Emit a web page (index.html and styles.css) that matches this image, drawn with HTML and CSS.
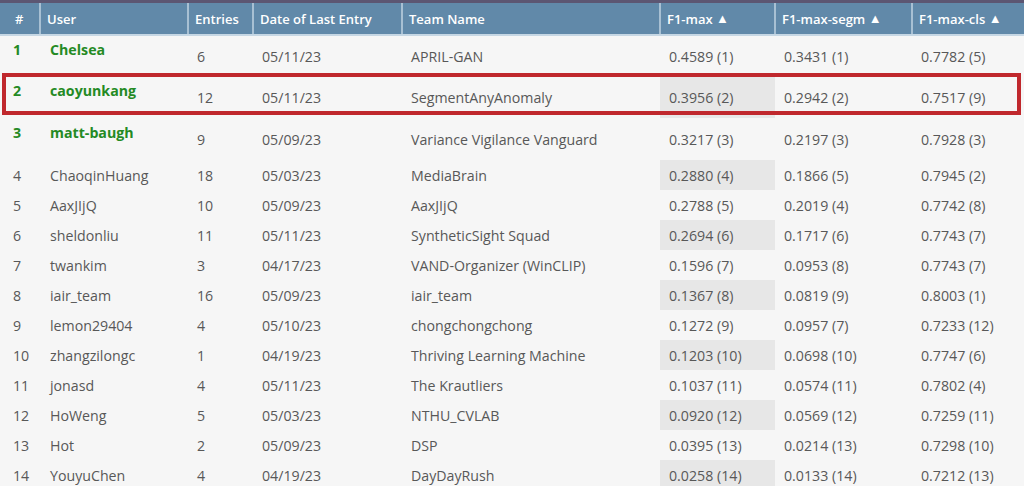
FILE: index.html
```html
<!DOCTYPE html>
<html>
<head>
<meta charset="utf-8">
<link rel="stylesheet" href="styles.css">
</head>
<body>
<div class="page">
  <div class="topbar"></div>
  <div class="board">
    <table class="lb">
      <colgroup>
        <col class="c-rank"><col class="c-user"><col class="c-ent"><col class="c-date">
        <col class="c-team"><col class="c-f1"><col class="c-segm"><col class="c-cls">
      </colgroup>
      <thead>
        <tr>
          <th class="h-rank">#</th>
          <th>User</th>
          <th>Entries</th>
          <th>Date of Last Entry</th>
          <th>Team Name</th>
          <th>F1-max <span class="tri">▲</span></th>
          <th>F1-max-segm <span class="tri">▲</span></th>
          <th>F1-max-cls <span class="tri">▲</span></th>
        </tr>
      </thead>
      <tbody>
        <tr class="top"><td class="rank">1</td><td class="user">Chelsea</td><td>6</td><td>05/11/23</td><td>APRIL-GAN</td><td class="f1">0.4589 (1)</td><td>0.3431 (1)</td><td>0.7782 (5)</td></tr>
        <tr class="top second alt"><td class="rank">2</td><td class="user">caoyunkang</td><td>12</td><td>05/11/23</td><td>SegmentAnyAnomaly</td><td class="f1">0.3956 (2)</td><td>0.2942 (2)</td><td>0.7517 (9)</td></tr>
        <tr class="top third"><td class="rank">3</td><td class="user">matt-baugh</td><td>9</td><td>05/09/23</td><td>Variance Vigilance Vanguard</td><td class="f1">0.3217 (3)</td><td>0.2197 (3)</td><td>0.7928 (3)</td></tr>
        <tr class="alt"><td class="rank">4</td><td class="user">ChaoqinHuang</td><td>18</td><td>05/03/23</td><td>MediaBrain</td><td class="f1">0.2880 (4)</td><td>0.1866 (5)</td><td>0.7945 (2)</td></tr>
        <tr><td class="rank">5</td><td class="user">AaxJIjQ</td><td>10</td><td>05/09/23</td><td>AaxJIjQ</td><td class="f1">0.2788 (5)</td><td>0.2019 (4)</td><td>0.7742 (8)</td></tr>
        <tr class="alt"><td class="rank">6</td><td class="user">sheldonliu</td><td>11</td><td>05/11/23</td><td>SyntheticSight Squad</td><td class="f1">0.2694 (6)</td><td>0.1717 (6)</td><td>0.7743 (7)</td></tr>
        <tr><td class="rank">7</td><td class="user">twankim</td><td>3</td><td>04/17/23</td><td>VAND-Organizer (WinCLIP)</td><td class="f1">0.1596 (7)</td><td>0.0953 (8)</td><td>0.7743 (7)</td></tr>
        <tr class="alt"><td class="rank">8</td><td class="user">iair_team</td><td>16</td><td>05/09/23</td><td>iair_team</td><td class="f1">0.1367 (8)</td><td>0.0819 (9)</td><td>0.8003 (1)</td></tr>
        <tr><td class="rank">9</td><td class="user">lemon29404</td><td>4</td><td>05/10/23</td><td>chongchongchong</td><td class="f1">0.1272 (9)</td><td>0.0957 (7)</td><td>0.7233 (12)</td></tr>
        <tr class="alt"><td class="rank">10</td><td class="user">zhangzilongc</td><td>1</td><td>04/19/23</td><td>Thriving Learning Machine</td><td class="f1">0.1203 (10)</td><td>0.0698 (10)</td><td>0.7747 (6)</td></tr>
        <tr><td class="rank">11</td><td class="user">jonasd</td><td>4</td><td>05/11/23</td><td>The Krautliers</td><td class="f1">0.1037 (11)</td><td>0.0574 (11)</td><td>0.7802 (4)</td></tr>
        <tr class="alt"><td class="rank">12</td><td class="user">HoWeng</td><td>5</td><td>05/03/23</td><td>NTHU_CVLAB</td><td class="f1">0.0920 (12)</td><td>0.0569 (12)</td><td>0.7259 (11)</td></tr>
        <tr><td class="rank">13</td><td class="user">Hot</td><td>2</td><td>05/09/23</td><td>DSP</td><td class="f1">0.0395 (13)</td><td>0.0214 (13)</td><td>0.7298 (10)</td></tr>
        <tr class="alt"><td class="rank">14</td><td class="user">YouyuChen</td><td>4</td><td>04/19/23</td><td>DayDayRush</td><td class="f1">0.0258 (14)</td><td>0.0133 (14)</td><td>0.7212 (13)</td></tr>
      </tbody>
    </table>
    <div class="mark"></div>
  </div>
</div>
</body>
</html>
```

FILE: styles.css
```css
html, body {
  margin: 0;
  padding: 0;
  background: #f6f6f6;
  overflow: hidden;
}
.page {
  width: 1024px;
  height: 486px;
  overflow: hidden;
  font-family: "Open Sans", "Noto Sans", sans-serif;
}
.topbar {
  height: 3px;
  background: #5c5672;
}
.board {
  position: relative;
}
.lb {
  width: 1024px;
  table-layout: fixed;
  border-collapse: collapse;
  font-size: 14.2px;
  color: #585858;
}
.c-rank { width: 40px; }
.c-user { width: 148px; }
.c-ent { width: 65px; }
.c-date { width: 149px; }
.c-team { width: 258px; }
.c-f1 { width: 115px; }
.c-segm { width: 137px; }
.c-cls { width: 112px; }

.lb thead tr {
  height: 32px;
}
.lb thead th {
  background: #6189a9;
  color: #ffffff;
  font-weight: 600;
  font-size: 13px;
  text-align: left;
  padding: 0 6px;
  border-left: 2px solid #a8c0d3;
  border-bottom: 2px solid #c6d7e4;
  white-space: nowrap;
}
.lb thead th:first-child {
  border-left: none;
}
.lb thead th.h-rank {
  padding-left: 15px;
}
.tri {
  font-size: 13px;
  position: relative;
  top: -1px;
}
.lb tbody tr {
  height: 30px;
}
.lb tbody tr.top {
  height: 42px;
}
.lb tbody tr.second {
  height: 41px;
}
.lb td {
  padding: 0 9px;
  vertical-align: middle;
  white-space: nowrap;
}
.lb td.rank {
  padding-left: 13px;
  padding-right: 0;
}
.lb td.user {
  padding-left: 10px;
}
.lb tr.top td.rank,
.lb tr.top td.user {
  vertical-align: top;
  padding-top: 4px;
  color: #248a24;
  font-weight: 700;
}
.lb tr.third td.rank,
.lb tr.third td.user {
  padding-top: 5px;
}
.lb tr.alt td.f1 {
  background: #e7e7e7;
}
.mark {
  position: absolute;
  left: 2px;
  top: 70px;
  width: 1011px;
  height: 34px;
  border: 4px solid #c0282d;
}
```
